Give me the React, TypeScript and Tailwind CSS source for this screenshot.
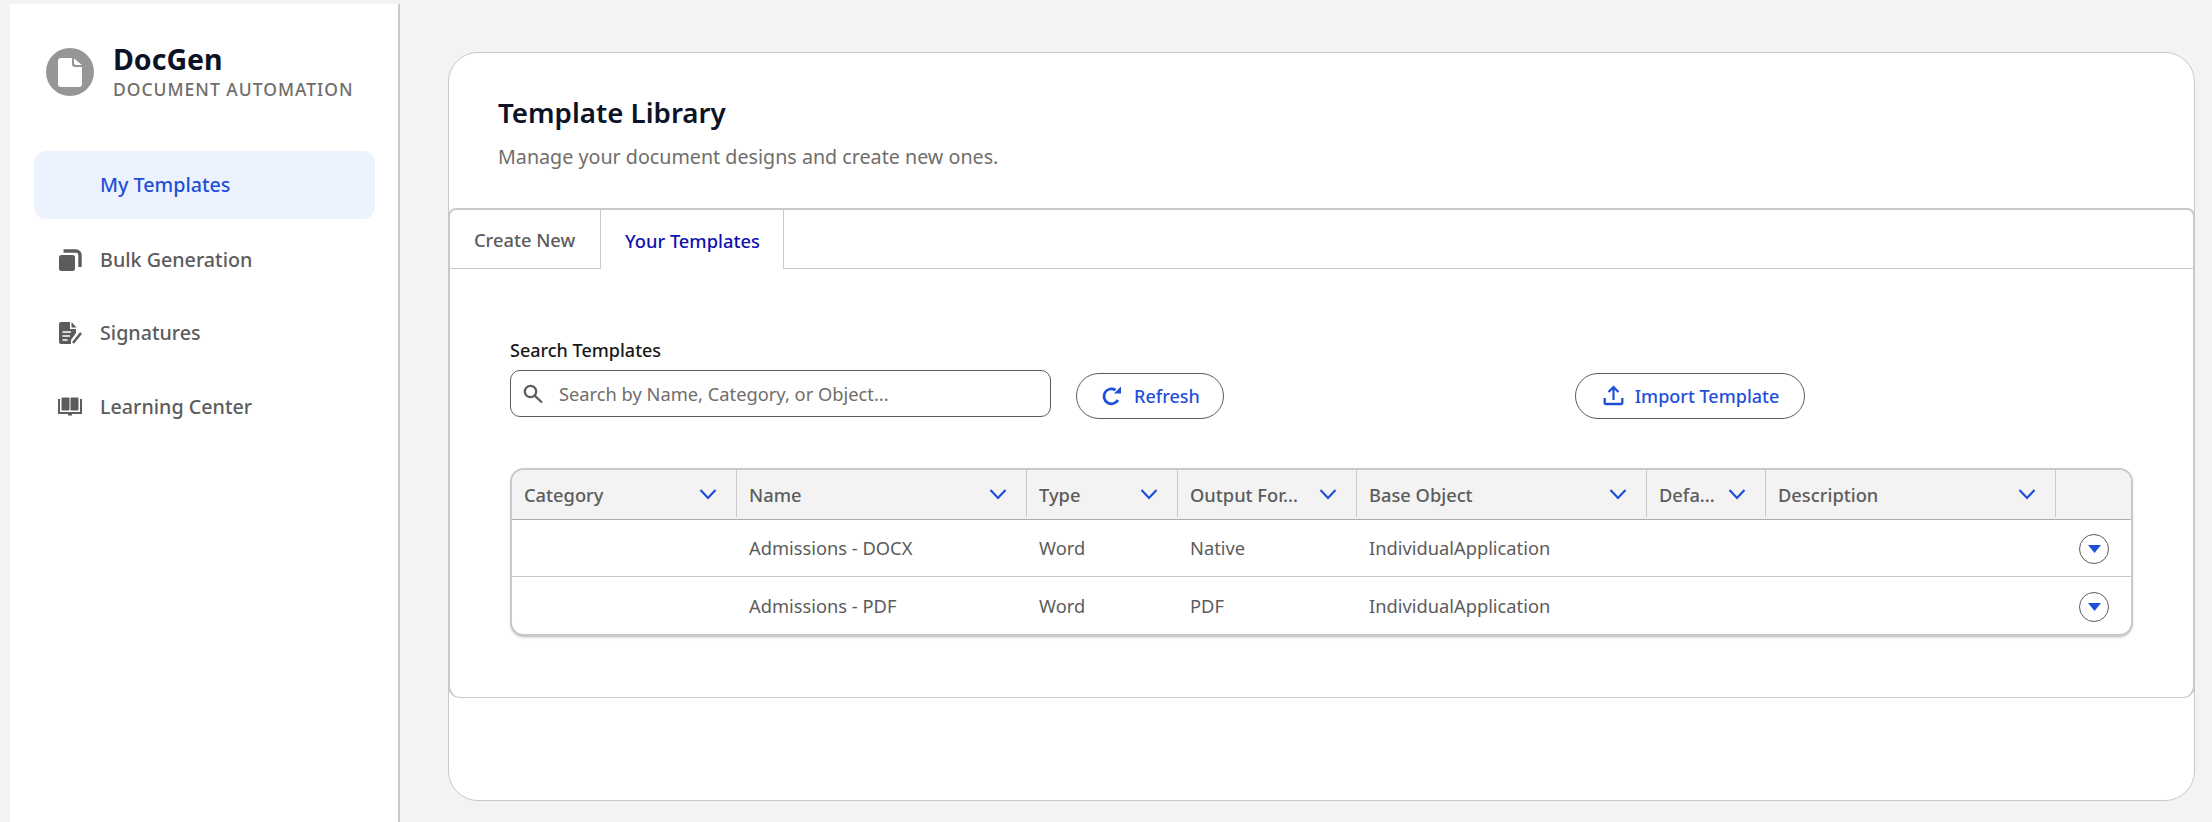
const font = { fontFamily: '"Noto Sans", "Liberation Sans", sans-serif' };

const columns = ["Category", "Name", "Type", "Output For...", "Base Object", "Defa...", "Description"];

const rows = [
  { name: "Admissions - DOCX", type: "Word", format: "Native", object: "IndividualApplication" },
  { name: "Admissions - PDF", type: "Word", format: "PDF", object: "IndividualApplication" },
];

const grid = "grid grid-cols-[225px_290px_151px_179px_290px_119px_290px_1fr]";

function LogoIcon() {
  return (
    <div className="flex h-12 w-12 shrink-0 items-center justify-center rounded-full bg-[#969696]">
      <svg width="24" height="29" viewBox="0 0 24 29" fill="white">
        <path d="M3 0h11v6a3 3 0 0 0 3 3h7v17a3 3 0 0 1-3 3H3a3 3 0 0 1-3-3V3a3 3 0 0 1 3-3z" />
        <path d="M16 .5L24 7h-6a2 2 0 0 1-2-2z" />
      </svg>
    </div>
  );
}

function BulkIcon() {
  return (
    <svg width="24" height="24" viewBox="0 0 24 24" fill="none">
      <rect x="1" y="7" width="16" height="16" rx="2.500" fill="#5c5c5c" />
      <path d="M5.500 3H18a4 4 0 0 1 4 4v12" stroke="#5c5c5c" strokeWidth="3.400" />
    </svg>
  );
}

function SignatureIcon() {
  return (
    <svg width="24" height="24" viewBox="0 0 24 24" fill="none">
      <path d="M3 1h9v7h6v4l-5 7v4H3a2 2 0 0 1-2-2V3a2 2 0 0 1 2-2z" fill="#5c5c5c" />
      <path d="M13.500 1l5 5.500h-5z" fill="#5c5c5c" />
      <path d="M4.500 11h8.500M4.500 15h7.500M4.500 19h5" stroke="white" strokeWidth="1.600" />
      <path d="M15 22l8-10" stroke="#5c5c5c" strokeWidth="2.600" />
    </svg>
  );
}

function BookIcon() {
  return (
    <svg width="24" height="20" viewBox="0 0 24 20" fill="none">
      <rect x="3.500" y="0.500" width="8" height="13" rx="1" fill="#5c5c5c" />
      <rect x="12.500" y="0.500" width="8" height="13" rx="1" fill="#5c5c5c" />
      <path d="M1 2v14h22V2" stroke="#5c5c5c" strokeWidth="2" />
      <path d="M10 16h4v2.500h-4z" fill="#5c5c5c" />
    </svg>
  );
}

function SearchIcon() {
  return (
    <svg width="20" height="20" viewBox="0 0 20 20" fill="none" className="shrink-0">
      <circle cx="7.500" cy="7.500" r="5.700" stroke="#5c5c5c" strokeWidth="2.300" />
      <path d="M11.700 11.700l7.300 6.800" stroke="#5c5c5c" strokeWidth="2.300" />
    </svg>
  );
}

function RefreshIcon() {
  return (
    <svg width="24" height="24" viewBox="0 0 24 24" fill="none" className="shrink-0">
      <path d="M18 16A7.500 7.500 0 1 1 15.500 6" stroke="#1f4fd8" strokeWidth="2.700" />
      <path d="M21 2.500v7h-7z" fill="#1f4fd8" />
    </svg>
  );
}

function UploadIcon() {
  return (
    <svg width="24" height="24" viewBox="0 0 24 24" fill="none" className="shrink-0">
      <path d="M3.700 14v5a1 1 0 0 0 1 1h15.600a1 1 0 0 0 1-1v-5" stroke="#1f4fd8" strokeWidth="2.300" />
      <path d="M12.500 3.500V16M7.500 8l5-5 5 5" stroke="#1f4fd8" strokeWidth="2.200" />
    </svg>
  );
}

function Chevron() {
  return (
    <svg width="18" height="12" viewBox="0 0 18 12" fill="none" className="shrink-0">
      <path d="M1.500 2l7.500 8 7.500-8" stroke="#1f4fd8" strokeWidth="2.200" />
    </svg>
  );
}

function NavItem({ icon, label }: { icon: React.ReactNode; label: string }) {
  return (
    <div className="flex h-[73.500px] items-center pl-[24px] text-[19.700px] font-medium text-[#5c5c5c]">
      <div className="flex w-[42px] items-center">{icon}</div>
      <span>{label}</span>
    </div>
  );
}

function PillButton({ icon, label, className }: { icon: React.ReactNode; label: string; className: string }) {
  return (
    <button className={`flex h-[46px] items-center justify-center gap-[10px] rounded-full border border-[#5c5c5c] bg-white text-[18px] font-medium text-[#1f4fd8] ${className}`}>
      {icon}
      {label}
    </button>
  );
}

export default function App() {
  return (
    <div style={font} className="flex h-[822px] w-[2212px] overflow-hidden bg-[#f3f3f3] pl-[10px] pt-1">
      <aside className="w-[390px] shrink-0 border-r-2 border-[#c9c9c9] bg-white px-6">
        <div className="flex items-start gap-[19px] pl-[12px] pt-11">
          <LogoIcon />
          <div className="-mt-1">
            <div className="text-[28.500px] font-bold leading-[30px] text-[#0d1326]">DocGen</div>
            <div className="whitespace-nowrap text-[17.500px] font-medium leading-[30px] tracking-[1px] text-[#706e6b]">DOCUMENT AUTOMATION</div>
          </div>
        </div>
        <nav className="mt-[47px]">
          <div className="flex h-[68px] w-[341px] items-center rounded-xl bg-[#ecf3fe] pl-[66px] text-[19.700px] font-medium text-[#1f4fd8]">
            My Templates
          </div>
          <div className="mt-[4px]">
            <NavItem icon={<BulkIcon />} label="Bulk Generation" />
            <NavItem icon={<SignatureIcon />} label="Signatures" />
            <NavItem icon={<BookIcon />} label="Learning Center" />
          </div>
        </nav>
      </aside>

      <main className="flex-1 pb-[21px] pl-[48px] pr-[17px] pt-12">
        <div className="h-[749px] rounded-[30px] border border-[#c9c9c9] bg-white">
          <div className="h-[155px] pl-[49px] pt-[41px]">
            <h1 className="text-[27.700px] font-semibold leading-[36px] text-[#0d1326]">Template Library</h1>
            <p className="mt-[14px] text-[19.700px] leading-[26px] text-[#706e6b]">Manage your document designs and create new ones.</p>
          </div>

          <div className="-mx-px h-[490px] rounded-b-xl rounded-t-lg border border-x-2 border-t-2 border-[#c9c9c9]">
            <div className="flex h-[59px] border-b border-[#c9c9c9] text-[18.300px] font-medium">
              <div className="flex w-[150px] items-center pl-[24px] pt-[2px] text-[#5c5c5c]">Create New</div>
              <div className="-mb-px flex w-[184px] items-center border-x border-[#c9c9c9] bg-white pl-[24px] pt-[2px] text-[#1010b0]">
                Your Templates
              </div>
            </div>

            <div className="pl-[60px] pt-[69px]">
              <div className="flex items-start">
                <div className="w-[541px]">
                  <label className="block text-[18px] font-medium leading-[24px] text-[#181818]">Search Templates</label>
                  <div className="mt-[8px] flex h-[47px] items-center rounded-[10px] border border-[#5c5c5c] pl-3">
                    <SearchIcon />
                    <span className="ml-[16px] text-[18.300px] text-[#706e6b]">Search by Name, Category, or Object...</span>
                  </div>
                </div>
                <PillButton className="ml-[25px] mt-[35px] w-[148px]" icon={<RefreshIcon />} label="Refresh" />
                <PillButton className="ml-[351px] mt-[35px] w-[230px]" icon={<UploadIcon />} label="Import Template" />
              </div>

              <div className="mt-[49px] w-[1623px] overflow-hidden rounded-[14px] border-x-2 border-b-[3px] border-t-2 border-[#c9c9c9] shadow-sm">
                <div className={`${grid} h-[50px] border-b border-[#adadad] bg-[#f3f3f3] text-[18.300px] font-medium text-[#5c5c5c]`}>
                  {columns.map((c) => (
                    <div key={c} className="mb-[2px] flex items-center justify-between border-r border-[#c9c9c9] pl-[12px] pr-[19px]">
                      <span className="whitespace-nowrap pt-[2px]">{c}</span>
                      <Chevron />
                    </div>
                  ))}
                  <div />
                </div>
                {rows.map((r, i) => (
                  <div key={r.name} className={`${grid} h-[57px] items-center text-[18.300px] text-[#5c5c5c] ${i === 0 ? "border-b border-[#c9c9c9]" : ""}`}>
                    <div />
                    <div className="pl-[12px]">{r.name}</div>
                    <div className="pl-[12px]">{r.type}</div>
                    <div className="pl-[12px]">{r.format}</div>
                    <div className="pl-[12px]">{r.object}</div>
                    <div />
                    <div />
                    <div className="mt-[2px] flex justify-end pr-[22px]">
                      <div className="flex h-[30px] w-[30px] items-center justify-center rounded-full border border-[#5c5c5c]">
                        <svg width="13" height="8" viewBox="0 0 13 8">
                          <path d="M0 0h13L6.500 8z" fill="#1f4fd8" />
                        </svg>
                      </div>
                    </div>
                  </div>
                ))}
              </div>
            </div>
          </div>
        </div>
      </main>
    </div>
  );
}
